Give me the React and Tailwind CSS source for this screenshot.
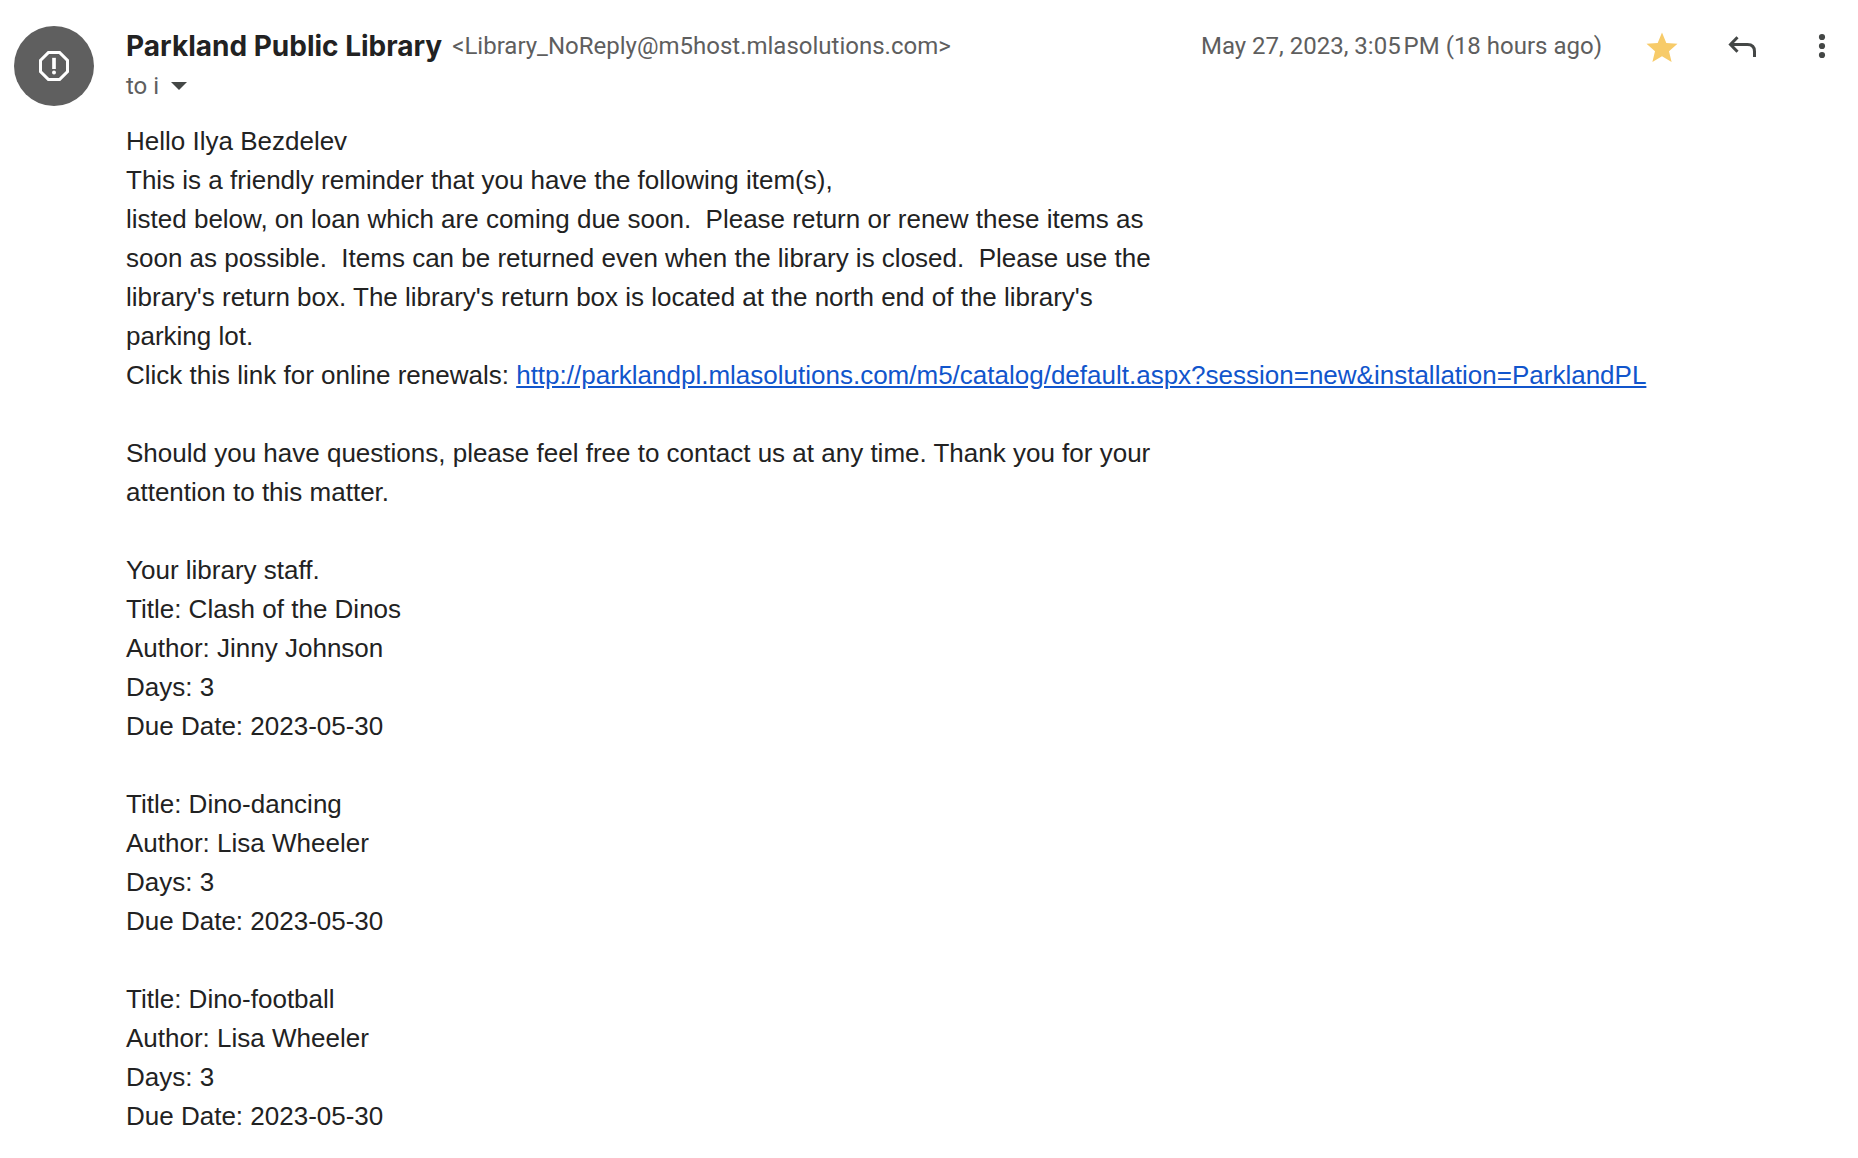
import React, { useState } from 'react';

const loans = [
  { title: 'Clash of the Dinos', author: 'Jinny Johnson', days: 3, due: '2023-05-30' },
  { title: 'Dino-dancing', author: 'Lisa Wheeler', days: 3, due: '2023-05-30' },
  { title: 'Dino-football', author: 'Lisa Wheeler', days: 3, due: '2023-05-30' },
];

const renewUrl = 'http://parklandpl.mlasolutions.com/m5/catalog/default.aspx?session=new&installation=ParklandPL';

function Avatar() {
  return (
    <div className="flex size-20 shrink-0 items-center justify-center rounded-full bg-[#5f5f5f]">
      <svg viewBox="0 0 24 24" className="size-10 fill-white" aria-hidden="true">
        <path d="M15.73 3H8.27L3 8.27v7.46L8.27 21h7.46L21 15.73V8.27L15.73 3zM19.2 14.95 14.95 19.2h-5.9L4.8 14.95v-5.9L9.05 4.8h5.9l4.25 4.25v5.9z" />
        <path d="M10.9 7.1h2.2v6.7h-2.2z" />
        <circle cx="12" cy="15.9" r="1.2" />
      </svg>
    </div>
  );
}

function MailActions() {
  const [starred, setStarred] = useState(true);

  return (
    <div className="flex items-center gap-11">
      <button type="button" aria-label="Starred" aria-pressed={starred} onClick={() => setStarred(!starred)}>
        <svg viewBox="0 0 36 36" className={starred ? 'size-9 fill-[#f7cb69]' : 'size-9 fill-[#c4c7c5]'}>
          <path d="M18 28.3 27.6 34.1 25 23.2 33.5 15.8 22.3 14.9 18 4.6 13.7 14.9 2.5 15.8 11 23.2 8.4 34.1z" />
        </svg>
      </button>
      <button type="button" aria-label="Reply">
        <svg viewBox="0 0 36 36" className="size-9 fill-none stroke-[#444746]" strokeWidth="3">
          <path d="M13.5 9.3 6.5 16.5l7 7.2M6.5 16.5H23.5q7 0 7 7V29" />
        </svg>
      </button>
      <button type="button" aria-label="More">
        <svg viewBox="0 0 36 36" className="size-9 fill-[#444746]">
          <circle cx="18" cy="9" r="3.1" />
          <circle cx="18" cy="18" r="3.1" />
          <circle cx="18" cy="27" r="3.1" />
        </svg>
      </button>
    </div>
  );
}

export default function App() {
  return (
    <article className="flex min-h-screen gap-8 bg-white pt-[26px] pr-[18px] pl-[14px] text-[#222222]">
      <Avatar />

      <div className="min-w-0 flex-1">
        {/* Sender, date and actions */}
        <header className="flex h-10 items-center justify-between">
          <h3 className="flex items-center gap-[10px]">
            <span className="font-['Inter',sans-serif] text-[28px] leading-[38px] font-bold">Parkland Public Library</span>
            <span className="font-[Roboto,sans-serif] text-[24px] leading-10 text-[#5e5e5e]">
              &lt;Library_NoReply@m5host.mlasolutions.com&gt;
            </span>
          </h3>
          <div className="flex items-center gap-[42px]">
            <time dateTime="2023-05-27T15:05" className="font-[Roboto,sans-serif] text-[24px] leading-10 text-[#5e5e5e]">
              May 27, 2023, 3:05&#8239;PM (18 hours ago)
            </time>
            <MailActions />
          </div>
        </header>

        <button
          type="button"
          aria-label="Show details"
          className="flex h-10 items-center gap-3 font-[Roboto,sans-serif] text-[24px] leading-10 text-[#5e5e5e]"
        >
          to i
          <svg viewBox="0 0 16 8" className="h-2 w-4 fill-[#444746]">
            <path d="M0 0h16L8 8z" />
          </svg>
        </button>

        {/* Message body */}
        <div className="pt-4 font-['Liberation_Sans',Arial,sans-serif] text-[26px] leading-[39px]">
          <p>Hello Ilya Bezdelev</p>
          <p>
            This is a friendly reminder that you have the following item(s),
            <br />
            listed below, on loan which are coming due soon.&nbsp; Please return or renew these items as
            <br />
            soon as possible.&nbsp; Items can be returned even when the library is closed.&nbsp; Please use the
            <br />
            library's return box. The library's return box is located at the north end of the library's
            <br />
            parking lot.
          </p>
          <p>
            Click this link for online renewals:{' '}
            <a href={renewUrl} className="text-[#1155cc] underline">
              {renewUrl}
            </a>
          </p>
          <p className="mt-[39px]">
            Should you have questions, please feel free to contact us at any time. Thank you for your
            <br />
            attention to this matter.
          </p>
          <p className="mt-[39px]">Your library staff.</p>
          <ul className="space-y-[39px]">
            {loans.map((loan) => (
              <li key={loan.title}>
                <p>Title: {loan.title}</p>
                <p>Author: {loan.author}</p>
                <p>Days: {loan.days}</p>
                <p>Due Date: {loan.due}</p>
              </li>
            ))}
          </ul>
        </div>
      </div>
    </article>
  );
}
